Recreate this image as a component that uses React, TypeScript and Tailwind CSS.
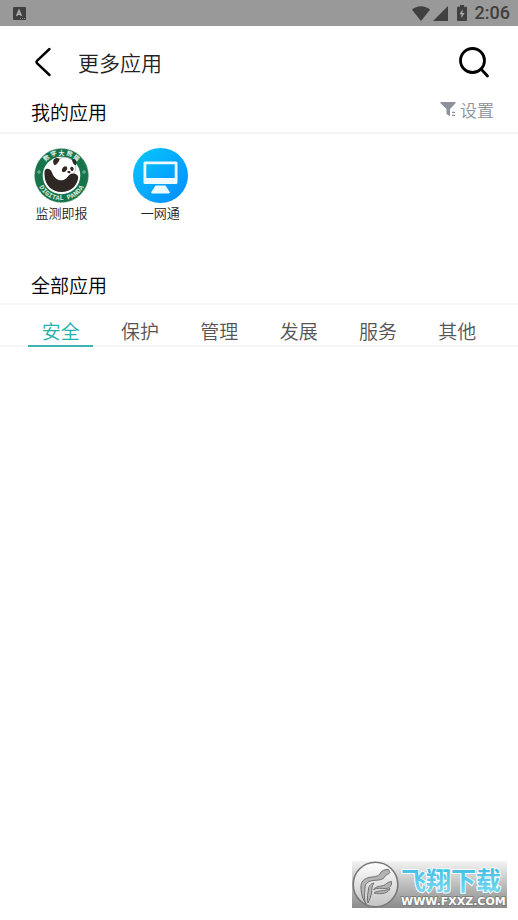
const apps = [
  { name: "监测即报", Icon: PandaIcon },
  { name: "一网通", Icon: MonitorIcon },
];

const tabs = ["安全", "保护", "管理", "发展", "服务", "其他"];

function StatusBar() {
  return (
    <div className="flex h-[26px] items-center justify-between bg-[#999999] pl-[13px] pr-2 text-[#404040]">
      <svg width="13" height="13" viewBox="0 0 13 13">
        <rect width="13" height="13" rx="1" fill="currentColor" />
        <path d="M3.6 9 L6 3.4 L8.4 9 M4.6 7.2 H7.4" fill="none" stroke="#b0b0b0" strokeWidth="1.4" />
        <path d="M7 11.5h1M9 11.5h1M11 11.5h1" stroke="#8c8c8c" strokeWidth="0.8" />
      </svg>
      <div className="flex items-center">
        <svg width="18" height="15" viewBox="0 0 18 15" fill="currentColor">
          <path d="M9 15 L0 3.7 C2.4 1.4 5.6 0.2 9 0.2 S15.6 1.4 18 3.7 Z" />
        </svg>
        <svg className="ml-[3px]" width="15" height="15" viewBox="0 0 15 15" fill="currentColor">
          <path d="M15 0 V15 H0 Z" />
        </svg>
        <svg className="ml-[9px]" width="10" height="16" viewBox="0 0 10 16">
          <path
            d="M3 0h4v1.7h2a1 1 0 0 1 1 1V15a1 1 0 0 1-1 1H1a1 1 0 0 1-1-1V2.7a1 1 0 0 1 1-1h2Z"
            fill="currentColor"
          />
          <path d="M5.6 4.2 2.4 9.3h2v4L7.6 8.1h-2Z" fill="#a5a5a5" />
        </svg>
        <span className="ml-2 font-[Roboto] text-lg font-medium leading-[26px]">2:06</span>
      </div>
    </div>
  );
}

function PandaIcon() {
  return (
    <svg width="55" height="55" viewBox="0 0 55 55">
      <defs>
        <path id="ring-top" d="M6.5 27.5 A21 21 0 0 1 48.5 27.5" />
        <path id="ring-bottom" d="M2.5 27.5 A25 25 0 0 0 52.5 27.5" />
      </defs>
      <circle cx="27.5" cy="27.5" r="27" fill="#17734a" />
      <circle cx="27.5" cy="27.5" r="26.9" fill="none" stroke="#7fb39a" strokeDasharray="1.5 1.5" />
      <circle cx="27.5" cy="27.5" r="18.8" fill="#fff" />
      <text fill="#e9f5ee" fontSize="6" fontWeight="700" fontFamily="Noto Sans CJK SC, sans-serif">
        <textPath href="#ring-top" startOffset="50%" textAnchor="middle">
          数 字 大 熊 猫
        </textPath>
      </text>
      <text fill="#d5eadf" fontSize="7" fontWeight="700" fontFamily="Liberation Mono, monospace">
        <textPath href="#ring-bottom" startOffset="50%" textAnchor="middle">
          DIGITAL PANDA
        </textPath>
      </text>
      <circle cx="5" cy="24" r="1.2" fill="none" stroke="#b9dccb" strokeWidth="0.7" />
      <circle cx="50" cy="24" r="1.2" fill="none" stroke="#b9dccb" strokeWidth="0.7" />
      <g fill="#2e2724">
        <path d="M11 22 C13 19.5 17 21 18 24.5 C19.5 29.5 24 33.5 29.5 32 C34 30.5 34 26.5 38 25.5 C41 25 44.5 26.5 44.2 30 C43 38.5 36 44 27.5 44 C18 44 11 37 10.6 28 C10.5 25 10.4 23 11 22Z" />
        <path d="M19.5 15.5 C18 11 22 8.5 25.8 10.8 C25.3 13 23 16.8 21 17 C20 17 19.7 16.4 19.5 15.5Z" />
        <path d="M38 12 C40 9.5 43.5 12.5 41.7 17.5 C40.5 17.5 38.8 15 38 12Z" />
        <path d="M29.5 19c2-1.5 4.2-.2 3.7 1.8s-2.5 3.9-4.2 3.2S27.9 20.3 29.5 19Z" />
        <path d="M37 19c1.3-1 3 .5 2.6 2.4s-1.7 2.2-2.6 1-1.2-2.5 0-3.4Z" />
        <path d="M33.5 23.5c1-.7 2.8-.5 3 .4s-1 1.4-2 1.2-1.7-.9-1-1.6Z" />
      </g>
      <path
        d="M25.8 10.8 C30 8.6 35.5 9 38 12 M41.7 17.5 C42.2 20 41.5 23 40 25"
        fill="none"
        stroke="#aaa5a2"
        strokeWidth="0.7"
      />
    </svg>
  );
}

function MonitorIcon() {
  return (
    <svg width="55" height="55" viewBox="0 0 55 55">
      <defs>
        <linearGradient id="sky" x1="0" y1="0" x2="1" y2="1">
          <stop offset="0.1" stopColor="#06c3fc" />
          <stop offset="0.9" stopColor="#0890ff" />
        </linearGradient>
      </defs>
      <circle cx="27.5" cy="27.5" r="27.5" fill="url(#sky)" />
      <path
        fill="#effaff"
        fillRule="evenodd"
        d="M12 13.5h31a1.5 1.5 0 0 1 1.5 1.5v19.5a1.5 1.5 0 0 1-1.5 1.5h-31a1.5 1.5 0 0 1-1.5-1.5V15a1.5 1.5 0 0 1 1.5-1.5ZM13.3 16.3v13.7h28.4V16.3Z"
      />
      <path d="M22.5 37.5h10l4.2 6.5a1 1 0 0 1-1 1.5H19.3a1 1 0 0 1-1-1.5Z" fill="#effaff" />
    </svg>
  );
}

function SectionTitle({ children }: { children: string }) {
  return <h2 className="text-[19px] font-[350] leading-7 text-black">{children}</h2>;
}

function Watermark() {
  return (
    <div className="mb-3 mr-[11px] flex h-[47px] w-[155px] items-center self-end bg-linear-to-b from-[#f4f4f4] to-[#8b8b8b]">
      <svg width="155" height="47" viewBox="0 0 155 47">
        <defs>
          <linearGradient id="silver" x1="0" y1="0" x2="0" y2="1">
            <stop offset="0" stopColor="#ffffff" />
            <stop offset="1" stopColor="#c4c4c4" />
          </linearGradient>
          <linearGradient id="azure" x1="0" y1="0" x2="0" y2="1">
            <stop offset="0" stopColor="#35b6e2" />
            <stop offset="1" stopColor="#7edcf3" />
          </linearGradient>
        </defs>
        <circle cx="23.5" cy="23.5" r="22.3" fill="url(#silver)" stroke="#777777" strokeWidth="1.6" />
        <g fill="#b4b4b4" stroke="#707070" strokeWidth="1" strokeLinejoin="round">
          <path d="M14 43 C11 36 13 32 13 27 C13 22 17 20 21 19.5 C27 19 31 19 33 15.5 C34 13 37 13.5 38 11.5 C37 10.5 37.5 9 36.5 8.5 C33 8.5 30 9 28.5 12 C26.5 16 22 15.5 17 16.5 C10 18 8.5 23 9 28 C9.5 34 10.5 38 14 43Z" />
          <path d="M16 42 C14.5 36 16 33 16.5 28 C17 24 19.5 22.5 22 22 C19.5 25.5 20 28 19.5 32 C19 36 17.5 38 16 42Z" />
          <path d="M21.5 28.5 C24 25 28 25.5 31.5 24.5 C34.5 23.5 35 21 39.5 20.5 C40 24 38 27.5 33.5 27.5 C29 27.5 26 26.5 21.5 28.5Z" />
          <path d="M22 32 C27 28.5 32 31 38 27.5 C36.5 32.5 29.5 33.5 22 32Z" />
        </g>
        <text
          x="49"
          y="29"
          fontSize="25"
          fontWeight="700"
          fontFamily="Noto Sans CJK SC, sans-serif"
          fill="url(#azure)"
          stroke="#f5fcff"
          strokeWidth="2"
          paintOrder="stroke"
        >
          飞翔下载
        </text>
        <text
          x="49"
          y="44"
          fontSize="11"
          fontWeight="700"
          fontFamily="DejaVu Sans, sans-serif"
          fill="#ffffff"
          stroke="#777777"
          strokeWidth="1.5"
          paintOrder="stroke"
        >
          WWW.FXXZ.COM
        </text>
      </svg>
    </div>
  );
}

export default function App() {
  return (
    <div className="flex min-h-screen flex-col bg-white font-['Noto_Sans_CJK_SC',sans-serif]">
      <StatusBar />

      <header className="flex h-[71px] items-center px-[34px] pr-7">
        <button type="button" aria-label="返回">
          <svg width="18" height="30" viewBox="0 0 18 30" fill="none" stroke="#000" strokeWidth="2.4">
            <path d="M15.5 2 L3.2 13.5 Q1.8 15 3.2 16.5 L15.5 28" strokeLinecap="round" />
          </svg>
        </button>
        <h1 className="ml-[26px] flex-1 text-[21px] font-[350] leading-8 text-[#222222]">更多应用</h1>
        <button type="button" aria-label="搜索">
          <svg width="32" height="32" viewBox="0 0 32 32" fill="none" stroke="#000" strokeWidth="2.8">
            <circle cx="14.5" cy="14.5" r="12" />
            <path d="M23 23 L29.5 30" strokeLinecap="round" />
          </svg>
        </button>
      </header>

      <section>
        <div className="flex h-[37px] items-start justify-between border-b-2 border-[#f5f5f5] pl-[31px] pr-6 pt-px">
          <SectionTitle>我的应用</SectionTitle>
          <button
            type="button"
            className="flex items-center gap-1 text-[17px] font-[350] leading-6 text-[#8c929b]"
          >
            <svg width="16" height="16" viewBox="0 0 16 16" fill="#8c929b">
              <path d="M0.5 0h15v1.2L10 7v7.2L6.5 12V7L0.5 1.2Z" />
              <path d="M12 9.7h3v1.2h-3ZM12 12.7h3v1.2h-3Z" />
            </svg>
            设置
          </button>
        </div>
        <ul className="grid grid-cols-5 px-3 pt-[14px]">
          {apps.map(({ name, Icon }) => (
            <li key={name}>
              <a
                href="#"
                className="flex flex-col items-center text-[13px] font-[350] leading-5 text-[#222222]"
              >
                <Icon />
                {name}
              </a>
            </li>
          ))}
        </ul>
      </section>

      <section className="mt-12">
        <div className="h-[34px] border-b-2 border-[#f5f5f5] pl-[31px]">
          <SectionTitle>全部应用</SectionTitle>
        </div>
        <nav className="grid grid-cols-6 border-b-2 border-[#f5f5f5] px-[21px] pt-3">
          {tabs.map((tab, i) => (
            <button
              key={tab}
              type="button"
              className={
                i === 0
                  ? "-mb-0.5 mx-[7px] border-b-2 border-[#3cb4b2] text-[19px] font-[350] leading-7 text-[#22b0ad]"
                  : "-mb-0.5 mx-[7px] border-b-2 border-transparent text-[19px] font-[350] leading-7 text-[#555555]"
              }
            >
              {tab}
            </button>
          ))}
        </nav>
      </section>

      <div className="flex-1" />
      <Watermark />
    </div>
  );
}
